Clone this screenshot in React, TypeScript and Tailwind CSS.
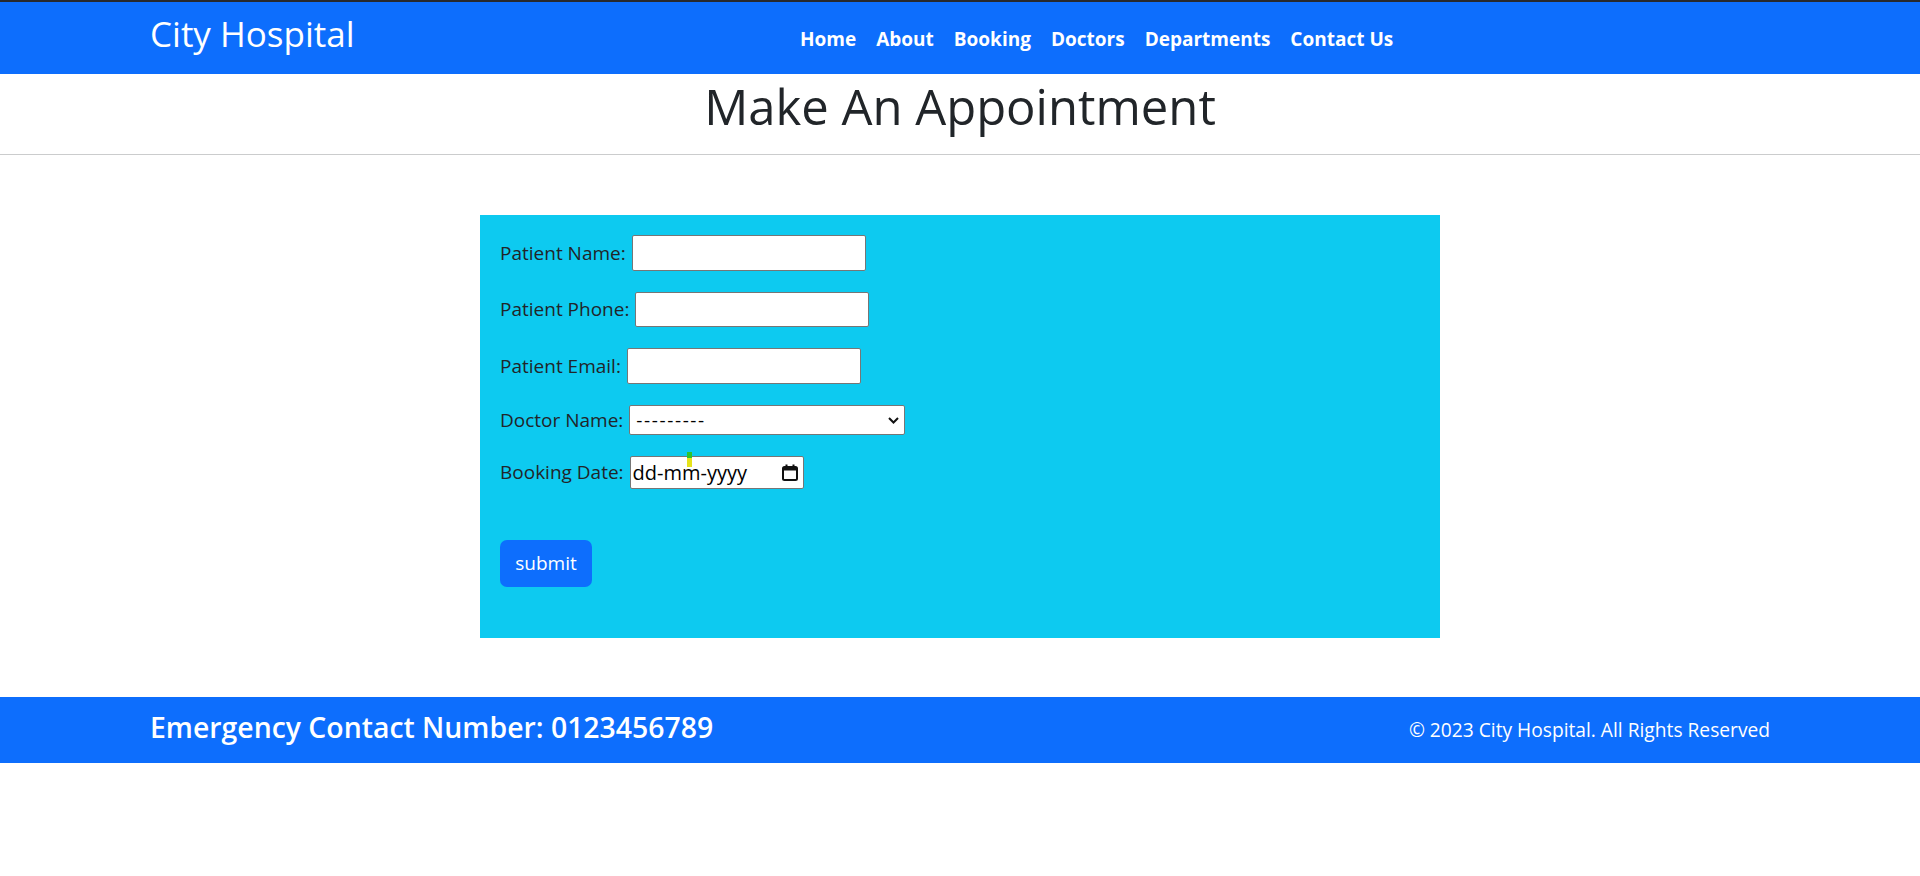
const font = { fontFamily: '"Open Sans", "Noto Sans", Arial, sans-serif' };

function Field({ label, h, w, children }: { label: string; h: string; w?: string; children?: React.ReactNode }) {
    return (
        <div className={`flex items-center gap-[6px] ${h}`}>
            <label className="text-[19px] text-[#212529]">{label}</label>
            {children ?? <input type="text" className={`h-full ${w} rounded-[2px] border border-[#767676] bg-white`} />}
        </div>
    );
}

function CalendarIcon() {
    return (
        <svg width="16" height="17" viewBox="0 0 16 17" fill="none">
            <rect x="1" y="3" width="14" height="13" rx="1.5" stroke="#111" strokeWidth="2" />
            <rect x="1" y="3" width="14" height="3.5" fill="#111" />
            <rect x="3.5" y="0.5" width="2" height="3" fill="#111" />
            <rect x="10.5" y="0.5" width="2" height="3" fill="#111" />
        </svg>
    );
}

export default function App() {
    return (
        <div className="min-h-[876px] bg-white" style={font}>
            <header className="border-t-2 border-[#27292d] bg-[#0d6efd]">
                <div className="mx-auto flex h-[72px] w-[1620px] items-center">
                    <div className="mb-[8px] w-[202px] whitespace-nowrap text-[35px] text-white">City Hospital</div>
                    <nav className="mt-[3px] ml-[438px] flex text-[19px] font-bold text-white">
                        {['Home', 'About', 'Booking', 'Doctors', 'Departments', 'Contact Us'].map((item) => (
                            <a key={item} href="#" className="px-[10px]">
                                {item}
                            </a>
                        ))}
                    </nav>
                </div>
            </header>

            <div className="pt-[3px]">
                <h1 className="text-center text-[49px] leading-[58px] text-[#212529]">Make An Appointment</h1>
            </div>
            <hr className="mt-[19px] border-t border-[#cbcccd]" />

            <section className="mx-auto mt-[60px] w-[960px] bg-[#0dcaf0] pt-[20px] pb-[51px] pl-[20px]">
                <div className="flex flex-col gap-[21px]">
                    <Field label="Patient Name:" h="h-[36px]" w="w-[234px]" />
                    <Field label="Patient Phone:" h="h-[35px]" w="w-[234px]" />
                    <Field label="Patient Email:" h="h-[36px]" w="w-[234px]" />
                    <Field label="Doctor Name:" h="h-[30px]">
                        <div className="flex h-full w-[276px] items-center justify-between rounded-[2px] border border-[#767676] bg-white pr-[5px] pl-[6px] text-[19px] tracking-[1.6px] text-black">
                            <span>---------</span>
                            <svg width="11" height="7" viewBox="0 0 11 7" fill="none">
                                <path d="M1 1l4.5 4.5L10 1" stroke="#111" strokeWidth="2" />
                            </svg>
                        </div>
                    </Field>
                    <Field label="Booking Date:" h="h-[33px]">
                        <div className="relative flex h-full w-[174px] items-center justify-between rounded-[2px] border border-[#767676] bg-white pr-[5px] pl-[2px] text-[20px] text-black">
                            <span>dd-mm-yyyy</span>
                            <CalendarIcon />
                            <span className="absolute top-[-5px] left-[56px] flex h-[15px] w-[5px] flex-col">
                                <span className="h-[6px] bg-[#2ec52a]" />
                                <span className="flex-1 bg-[#e6e31a]" />
                            </span>
                        </div>
                    </Field>
                </div>
                <button className="mt-[51px] h-[47px] w-[92px] rounded-[7px] bg-[#0d6efd] text-[19px] text-white">
                    submit
                </button>
            </section>

            <footer className="mt-[59px] bg-[#0d6efd]">
                <div className="mx-auto flex h-[66px] w-[1620px] items-center justify-between text-white">
                    <span className="mb-[6px] text-[28.4px] font-semibold">Emergency Contact Number: 0123456789</span>
                    <span className="text-[19.2px]">© 2023 City Hospital. All Rights Reserved</span>
                </div>
            </footer>
        </div>
    );
}
